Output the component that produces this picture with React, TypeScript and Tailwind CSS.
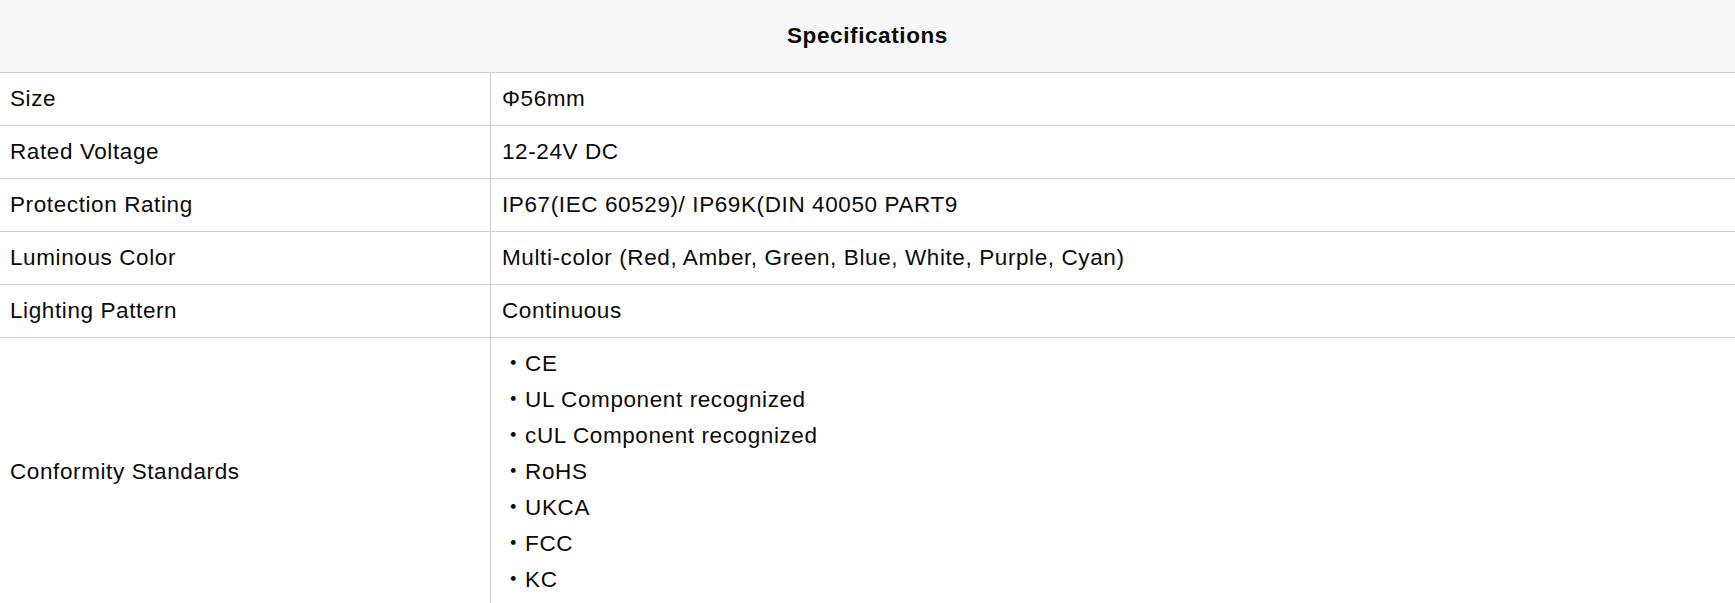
import React from "react";

const rows: [string, string][] = [
  ["Size", "Φ56mm"],
  ["Rated Voltage", "12-24V DC"],
  ["Protection Rating", "IP67(IEC 60529)/ IP69K(DIN 40050 PART9"],
  ["Luminous Color", "Multi-color (Red, Amber, Green, Blue, White, Purple, Cyan)"],
  ["Lighting Pattern", "Continuous"],
];

const standards = [
  "CE",
  "UL Component recognized",
  "cUL Component recognized",
  "RoHS",
  "UKCA",
  "FCC",
  "KC",
];

export default function App() {
  return (
    <div
      className="w-full bg-white text-[22.5px] leading-[36px] tracking-[0.6px] text-[#0a0a0a]"
      style={{ fontFamily: '"Liberation Sans", Arial, "Noto Sans CJK JP", sans-serif' }}
    >
      <div className="flex h-[73px] items-center justify-center border-b border-[#cfcfcf] bg-[#f7f7f7] font-bold">
        Specifications
      </div>
      {rows.map(([k, v]) => (
        <div key={k} className="grid grid-cols-[491px_1fr] border-b border-[#cfcfcf]">
          <div className="border-r border-[#cfcfcf] px-[10px] py-2">{k}</div>
          <div className="px-[11px] py-2">{v}</div>
        </div>
      ))}
      <div className="grid grid-cols-[491px_1fr] border-b border-[#cfcfcf]">
        <div className="flex items-center border-r border-[#cfcfcf] px-[10px] py-2">
          Conformity Standards
        </div>
        <div className="px-[11px] py-2">
          {standards.map((s) => (
            <div key={s} className="h-[36px]">
              <span
                className="leading-none"
                style={{ fontFamily: '"Noto Sans CJK JP", sans-serif' }}
              >
                ・
              </span>
              {s}
            </div>
          ))}
        </div>
      </div>
    </div>
  );
}
